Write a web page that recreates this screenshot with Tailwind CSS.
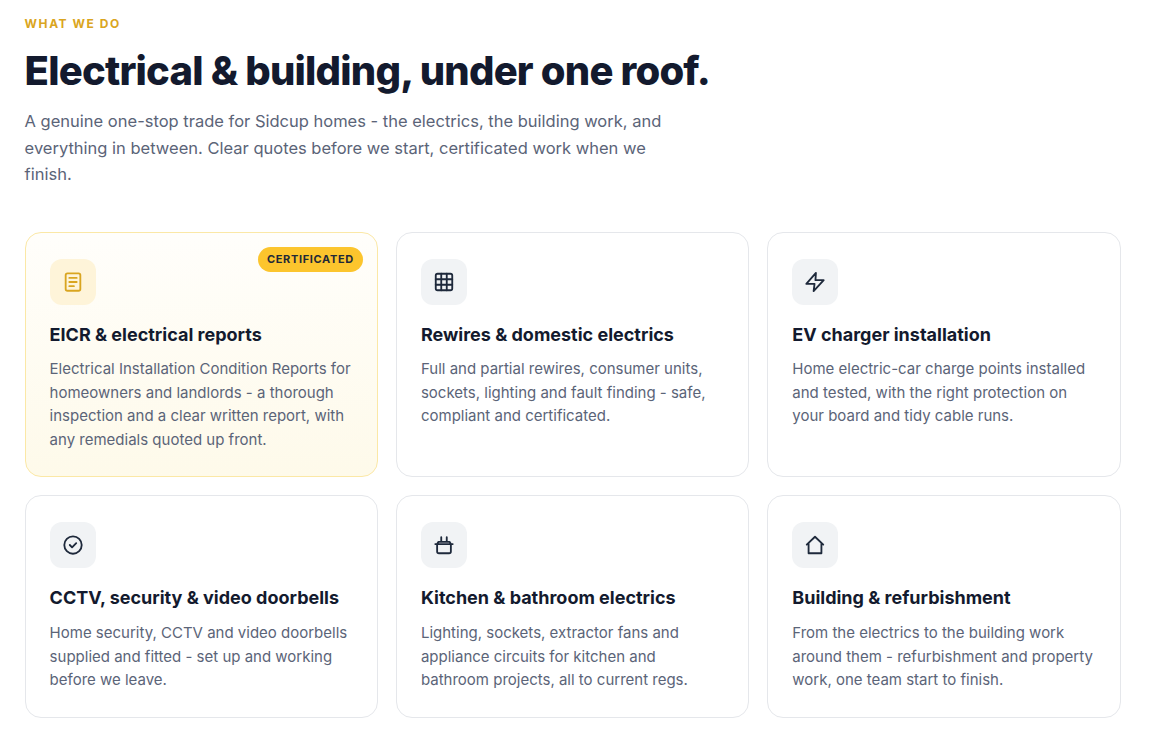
<!doctype html>
<html lang="en">
<head>
<meta charset="utf-8">
<title>What we do</title>
<script src="https://cdn.jsdelivr.net/npm/@tailwindcss/browser@4"></script>
</head>
<body class="bg-white font-['Inter',sans-serif] overflow-hidden">
<section class="w-[1152px] h-[755px] pl-[24.6px] pr-[31.4px] pt-[16px]">
  <p class="text-[12px] leading-[16px] font-bold tracking-[0.13em] text-[#daa520]">WHAT WE DO</p>
  <h1 class="mt-[15px] text-[40px] leading-[48px] font-extrabold tracking-[-0.02em] text-[#131a2e]">Electrical &amp; building, under one roof.</h1>
  <p class="mt-[13.25px] w-[660px] text-[16.5px] leading-[26.4px] text-[#5b6478]">A genuine one-stop trade for Sidcup homes - the electrics, the building work, and everything in between. Clear quotes before we start, certificated work when we finish.</p>
  <div class="mt-[44.75px] grid grid-cols-3 gap-[18px]">
    <article class="relative h-[245px] rounded-[16px] border border-[#fbe8a6] bg-gradient-to-b from-[#fffefb] to-[#fefaea] px-[24px] pt-[26px]">
      <span class="absolute top-[14px] right-[14px] rounded-full bg-[#fcc52d] px-[9px] py-[5px] text-[11px] leading-[15px] font-bold tracking-[0.06em] text-[#1f2937]">CERTIFICATED</span>
      <div class="flex h-[46px] w-[46px] items-center justify-center rounded-[12px] bg-[#fef4d9]">
        <svg class="h-[22px] w-[22px]" viewBox="0 0 24 24" fill="none" stroke="#d9a520" stroke-width="2" stroke-linecap="round" stroke-linejoin="round"><rect x="4" y="2.500" width="16" height="19" rx="2"/><path d="M8 7.500h8M8 12h8M8 16.500h5"/></svg>
      </div>
      <h3 class="mt-[18px] text-[18px] leading-[24px] font-bold text-[#131a2e]">EICR &amp; electrical reports</h3>
      <p class="mt-[10px] text-[15px] leading-[23.5px] text-[#5b6478]">Electrical Installation Condition Reports for homeowners and landlords - a thorough inspection and a clear written report, with any remedials quoted up front.</p>
    </article>
    <article class="h-[245px] rounded-[16px] border border-[#e5e7eb] bg-white px-[24px] pt-[26px]">
      <div class="flex h-[46px] w-[46px] items-center justify-center rounded-[12px] bg-[#f1f3f5]">
        <svg class="h-[22px] w-[22px]" viewBox="0 0 24 24" fill="none" stroke="#1e293b" stroke-width="2" stroke-linecap="round" stroke-linejoin="round"><rect x="3" y="3" width="18" height="18" rx="2"/><path d="M3 9h18M3 15h18M9 3v18M15 3v18"/></svg>
      </div>
      <h3 class="mt-[18px] text-[18px] leading-[24px] font-bold text-[#131a2e]">Rewires &amp; domestic electrics</h3>
      <p class="mt-[10px] text-[15px] leading-[23.5px] text-[#5b6478]">Full and partial rewires, consumer units, sockets, lighting and fault finding - safe, compliant and certificated.</p>
    </article>
    <article class="h-[245px] rounded-[16px] border border-[#e5e7eb] bg-white px-[24px] pt-[26px]">
      <div class="flex h-[46px] w-[46px] items-center justify-center rounded-[12px] bg-[#f1f3f5]">
        <svg class="h-[22px] w-[22px]" viewBox="0 0 24 24" fill="none" stroke="#1e293b" stroke-width="2" stroke-linecap="round" stroke-linejoin="round"><path d="M13 2 2.500 14h9l-1 8 11-12h-9l.5-8z"/></svg>
      </div>
      <h3 class="mt-[18px] text-[18px] leading-[24px] font-bold text-[#131a2e]">EV charger installation</h3>
      <p class="mt-[10px] text-[15px] leading-[23.5px] text-[#5b6478]">Home electric-car charge points installed and tested, with the right protection on your board and tidy cable runs.</p>
    </article>
    <article class="h-[223px] rounded-[16px] border border-[#e5e7eb] bg-white px-[24px] pt-[26px]">
      <div class="flex h-[46px] w-[46px] items-center justify-center rounded-[12px] bg-[#f1f3f5]">
        <svg class="h-[22px] w-[22px]" viewBox="0 0 24 24" fill="none" stroke="#1e293b" stroke-width="2" stroke-linecap="round" stroke-linejoin="round"><circle cx="12" cy="12" r="9.500"/><path d="m8.500 12 2.500 2.500 4.500-4.500"/></svg>
      </div>
      <h3 class="mt-[18px] text-[18px] leading-[24px] font-bold text-[#131a2e]">CCTV, security &amp; video doorbells</h3>
      <p class="mt-[11px] text-[15px] leading-[23.5px] text-[#5b6478]">Home security, CCTV and video doorbells supplied and fitted - set up and working before we leave.</p>
    </article>
    <article class="h-[223px] rounded-[16px] border border-[#e5e7eb] bg-white px-[24px] pt-[26px]">
      <div class="flex h-[46px] w-[46px] items-center justify-center rounded-[12px] bg-[#f1f3f5]">
        <svg class="h-[22px] w-[22px]" viewBox="0 0 24 24" fill="none" stroke="#1e293b" stroke-width="2" stroke-linecap="round" stroke-linejoin="round"><path d="M2.500 11h19M4.500 11l1.500-2.500h12l1.500 2.500M4.500 11v8a2 2 0 0 0 2 2h11a2 2 0 0 0 2-2v-8M9 8.500V3.500M15 8.500V3.500"/></svg>
      </div>
      <h3 class="mt-[18px] text-[18px] leading-[24px] font-bold text-[#131a2e]">Kitchen &amp; bathroom electrics</h3>
      <p class="mt-[11px] text-[15px] leading-[23.5px] text-[#5b6478]">Lighting, sockets, extractor fans and appliance circuits for kitchen and bathroom projects, all to current regs.</p>
    </article>
    <article class="h-[223px] rounded-[16px] border border-[#e5e7eb] bg-white px-[24px] pt-[26px]">
      <div class="flex h-[46px] w-[46px] items-center justify-center rounded-[12px] bg-[#f1f3f5]">
        <svg class="h-[22px] w-[22px]" viewBox="0 0 24 24" fill="none" stroke="#1e293b" stroke-width="2" stroke-linecap="round" stroke-linejoin="round"><path d="M3 11.500 12 3l9 8.500M5 9.800V21h14V9.800"/></svg>
      </div>
      <h3 class="mt-[18px] text-[18px] leading-[24px] font-bold text-[#131a2e]">Building &amp; refurbishment</h3>
      <p class="mt-[11px] text-[15px] leading-[23.5px] text-[#5b6478]">From the electrics to the building work around them - refurbishment and property work, one team start to finish.</p>
    </article>
  </div>
</section>
</body>
</html>
